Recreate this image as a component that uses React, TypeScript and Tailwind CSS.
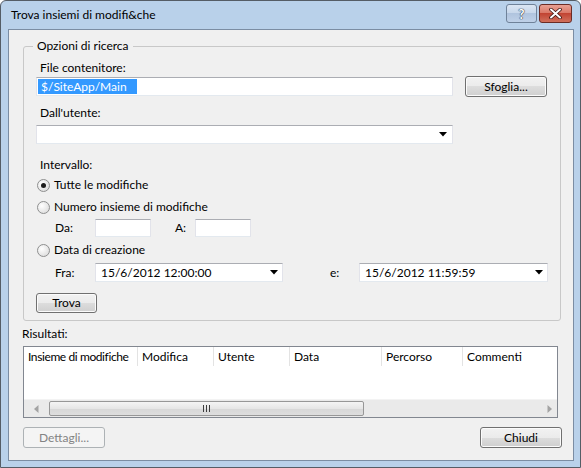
import React from 'react';

const btn =
  'rounded-[3px] border border-[#707070] bg-[linear-gradient(#f2f2f2_0%,#ebebeb_50%,#dddddd_50%,#cfcfcf_100%)] shadow-[inset_0_0_0_1px_#fbfbfb] flex items-center justify-center text-black';

const field =
  'border border-[#e2e3ea] border-t-[#abadb3] border-b-[#e3e9ef] bg-white';

const Arrow: React.FC = () => (
  <svg width="8" height="5" viewBox="0 0 8 5" className="shrink-0">
    <path d="M0 0 H8 L4 4.5 Z" fill="#000" />
  </svg>
);

const Combo: React.FC<{ className: string; text?: string }> = ({ className, text }) => (
  <div className={`${field} ${className} flex items-center pl-[5px]`}>
    <span className="flex-1">{text}</span>
    <Arrow />
  </div>
);

const Radio: React.FC<{ checked?: boolean; label: string }> = ({ checked, label }) => (
  <div className="flex items-center h-[16px]">
    <span className="ml-[1px] w-[13px] h-[13px] rounded-full border border-[#8e8f8f] bg-[radial-gradient(circle_at_35%_35%,#ffffff,#d6d6d6)] flex items-center justify-center">
      {checked && <span className="w-[5px] h-[5px] rounded-full bg-[#1c1c1c]" />}
    </span>
    <span className="ml-[4px]">{label}</span>
  </div>
);

const columns = [
  { name: 'Insieme di modifiche', w: 'w-[114px] tracking-[-0.4px]' },
  { name: 'Modifica', w: 'w-[76px]' },
  { name: 'Utente', w: 'w-[76px]' },
  { name: 'Data', w: 'w-[92px]' },
  { name: 'Percorso', w: 'w-[81px]' },
  { name: 'Commenti', w: 'flex-1' },
];

export default function App() {
  return (
    <div className="w-[581px] h-[468px] bg-[#b9d1ea] border border-[#555d66] rounded-t-[6px] flex flex-col text-[12px] leading-[16px] text-black font-['Lato','Noto_Sans',sans-serif]">
      {/* Title bar */}
      <div className="h-[28px] flex items-start shrink-0">
        <span className="ml-[10px] mt-[6px]">Trova insiemi di modifi&amp;che</span>
        <div className="ml-auto mr-[8px] mt-[3px] flex gap-[2px]">
          <div className="w-[31px] h-[19px] rounded-[3px] border border-[#6f8299] bg-[linear-gradient(#dbe6f3_0%,#c6d6ea_50%,#b0c4de_50%,#bfd1e8_100%)] flex items-center justify-center">
            <span className="text-[13px] font-bold text-white [text-shadow:0_0_1px_#2b3a4c,0_0_1px_#2b3a4c,0_0_1px_#2b3a4c]">?</span>
          </div>
          <div className="w-[33px] h-[19px] rounded-[3px] border border-[#6b2c25] bg-[linear-gradient(#e8a093_0%,#d97564_50%,#c24433_50%,#d0705c_100%)] flex items-center justify-center">
            <svg width="13" height="11" viewBox="0 0 13 11">
              <path d="M2 1.5 L11 9.5 M11 1.5 L2 9.5" stroke="#3b1410" strokeWidth="3.6" strokeLinecap="round" />
              <path d="M2 1.5 L11 9.5 M11 1.5 L2 9.5" stroke="#fff" strokeWidth="2" strokeLinecap="round" />
            </svg>
          </div>
        </div>
      </div>

      {/* Client area */}
      <div className="flex-1 ml-[7px] mr-[6px] mb-[6px] border border-[#7b8da3] bg-[#f0f0f0] flex flex-col px-[14px]">
        <fieldset className="mt-[8px] border border-[#c8c8c8] rounded-[3px] px-[12px] pb-[7px]">
          <legend className="ml-[-3px] px-[4px]">Opzioni di ricerca</legend>

          <div className="mt-[6px] pl-[4px]">File contenitore:</div>
          <div className="flex items-center h-[21px]">
            <div className={`${field} w-[417px] h-[19px] p-[1px] flex`}>
              <span className="bg-[#3399ff] text-white w-[99px] pl-[3px] leading-[15px]">$/SiteApp/Main</span>
            </div>
            <div className={`${btn} ml-[12px] w-[82px] h-[21px]`}>Sfoglia...</div>
          </div>

          <div className="mt-[8px] pl-[4px]">Dall'utente:</div>
          <Combo className="mt-[4px] w-[417px] h-[19px] pr-[5px]" />

          <div className="mt-[13px] pl-[4px]">Intervallo:</div>
          <div className="mt-[4px]">
            <Radio checked label="Tutte le modifiche" />
          </div>
          <div className="mt-[6px]">
            <Radio label="Numero insieme di modifiche" />
          </div>
          <div className="mt-[4px] flex items-center h-[18px]">
            <span className="ml-[19px] w-[40px]">Da:</span>
            <div className={`${field} w-[56px] h-[18px]`} />
            <span className="ml-[24px] w-[20px]">A:</span>
            <div className={`${field} w-[56px] h-[18px]`} />
          </div>
          <div className="mt-[5px]">
            <Radio label="Data di creazione" />
          </div>
          <div className="mt-[5px] flex items-center h-[19px]">
            <span className="ml-[19px] w-[40px]">Fra:</span>
            <Combo className="w-[188px] h-[19px] pr-[4px]" text="15/6/2012 12:00:00" />
            <span className="ml-[47px] w-[29px]">e:</span>
            <Combo className="w-[189px] h-[19px] pr-[4px]" text="15/6/2012 11:59:59" />
          </div>
          <div className={`${btn} mt-[11px] w-[61px] h-[20px]`}>Trova</div>
        </fieldset>

        <div className="mt-[5px] ml-[-1px]">Risultati:</div>
        <div className="mt-[4px] mr-[1px] h-[72px] border border-[#828790] bg-white flex flex-col">
          <div className="h-[19px] flex">
            {columns.map((c, i) => (
              <div
                key={c.name}
                className={`${c.w} whitespace-nowrap flex items-center pl-[4px] ${i < columns.length - 1 ? 'border-r border-[#e3e3e3]' : ''}`}
              >
                {c.name}
              </div>
            ))}
          </div>
          <div className="flex-1" />
          <div className="h-[18px] bg-[#eaeaea] flex items-center border-t border-[#f3f3f3]">
            <div className="w-[25px] flex justify-center">
              <svg width="5" height="8" viewBox="0 0 5 8">
                <path d="M4.5 0 V8 L0 4 Z" fill="#a3a3a3" />
              </svg>
            </div>
            <div className="w-[315px] h-[15px] rounded-[2px] border border-[#979797] bg-[linear-gradient(#f4f4f4_0%,#e6e6e6_50%,#d7d7d7_50%,#dedede_100%)] flex items-center justify-center">
              <svg width="7" height="7" viewBox="0 0 7 7">
                <path d="M0.5 0 V7 M3.5 0 V7 M6.5 0 V7" stroke="#3c3c3c" strokeWidth="1" />
              </svg>
            </div>
            <div className="flex-1" />
            <div className="w-[16px] flex justify-center">
              <svg width="5" height="8" viewBox="0 0 5 8">
                <path d="M0.5 0 V8 L5 4 Z" fill="#a3a3a3" />
              </svg>
            </div>
          </div>
        </div>

        <div className="mt-[9px] mr-[-3px] flex justify-between">
          <div className="h-[21px] w-[82px] rounded-[3px] border border-[#adb2b5] bg-[#f4f4f4] flex items-center justify-center text-[#838383]">
            Dettagli...
          </div>
          <div className={`${btn} w-[82px] h-[21px]`}>Chiudi</div>
        </div>
      </div>
    </div>
  );
}
